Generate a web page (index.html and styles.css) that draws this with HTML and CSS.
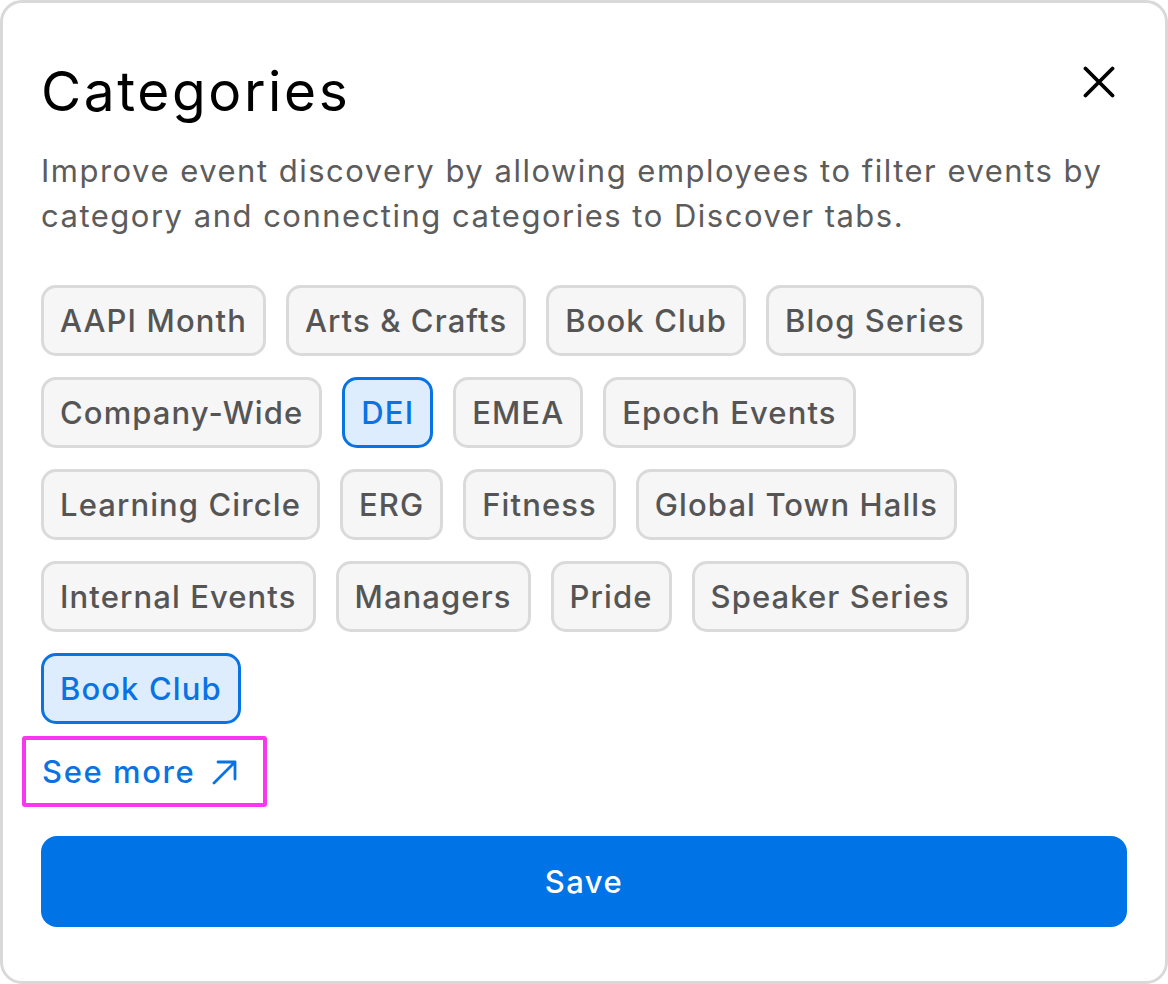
FILE: index.html
```html
<!DOCTYPE html>
<html lang="en">
<head>
<meta charset="utf-8">
<title>Categories</title>
<link rel="stylesheet" href="styles.css">
</head>
<body>
<div class="card">
  <div class="header">
    <h1 class="title">Categories</h1>
    <button class="close" aria-label="Close">
      <svg width="32" height="32" viewBox="0 0 32 32"><path d="M2.5 2.5 L29.5 29.5 M29.5 2.5 L2.5 29.5" stroke="#000" stroke-width="3.8" stroke-linecap="round" fill="none"/></svg>
    </button>
  </div>
  <p class="desc">Improve event discovery by allowing employees to filter events by category and connecting categories to Discover tabs.</p>
  <div class="chips">
    <div class="row">
      <span class="chip">AAPI Month</span>
      <span class="chip">Arts &amp; Crafts</span>
      <span class="chip">Book Club</span>
      <span class="chip">Blog Series</span>
    </div>
    <div class="row">
      <span class="chip">Company-Wide</span>
      <span class="chip selected">DEI</span>
      <span class="chip">EMEA</span>
      <span class="chip">Epoch Events</span>
    </div>
    <div class="row">
      <span class="chip">Learning Circle</span>
      <span class="chip">ERG</span>
      <span class="chip">Fitness</span>
      <span class="chip">Global Town Halls</span>
    </div>
    <div class="row">
      <span class="chip">Internal Events</span>
      <span class="chip">Managers</span>
      <span class="chip">Pride</span>
      <span class="chip">Speaker Series</span>
    </div>
    <div class="row">
      <span class="chip selected">Book Club</span>
    </div>
  </div>
  <a class="see-more" href="#">See more
    <svg width="26" height="26" viewBox="0 0 26 26"><path d="M2 24 L23 3 M6 3 H23 V20" stroke="#0a73e4" stroke-width="2.8" stroke-linecap="round" stroke-linejoin="round" fill="none"/></svg>
  </a>
  <button class="save">Save</button>
</div>
</body>
</html>
```
FILE: styles.css
```css
html, body {
  margin: 0;
  padding: 0;
  background: #ffffff;
}
body {
  font-family: "Inter", "Noto Sans", sans-serif;
}
.card {
  box-sizing: border-box;
  width: 1168px;
  height: 984px;
  border: 3px solid #d9d9d9;
  border-radius: 22px;
  padding: 55px 38px 0 38px;
  background: #fff;
}
.header {
  display: flex;
  justify-content: space-between;
  align-items: center;
}
.title {
  margin: 0;
  font-size: 55px;
  font-weight: 400;
  letter-spacing: 2.6px;
  line-height: 66px;
  color: #000;
}
.close {
  border: 0;
  background: none;
  padding: 0;
  margin: 0 12px 18px 0;
  width: 32px;
  height: 32px;
  display: flex;
}
.desc {
  margin: 24px 0 0 0;
  font-size: 31px;
  letter-spacing: 1.5px;
  line-height: 45px;
  color: #5c5c5c;
  width: 1086px;
}
.chips {
  margin-top: 47px;
  display: flex;
  flex-direction: column;
  gap: 21px;
}
.row {
  display: flex;
  gap: 20px;
}
.chip {
  box-sizing: border-box;
  height: 71px;
  display: flex;
  align-items: center;
  padding: 0 16px;
  border: 3px solid #dadada;
  border-radius: 15px;
  background: #f6f6f6;
  color: #555555;
  font-size: 31px;
  letter-spacing: 1.1px;
  font-weight: 500;
}
.chip.selected {
  border-color: #0a73e4;
  background: #deedfd;
  color: #0a73e4;
}
.see-more {
  margin: 12px 0 0 -19px;
  box-sizing: border-box;
  width: 245px;
  height: 71px;
  display: flex;
  align-items: center;
  gap: 17px;
  padding-left: 16px;
  border: 4px solid #fb36f0;
  border-radius: 3px;
  color: #0a73e4;
  font-size: 31px;
  letter-spacing: 1.6px;
  font-weight: 500;
  text-decoration: none;
}
.save {
  display: block;
  margin-top: 29px;
  width: 1086px;
  height: 91px;
  border: 0;
  border-radius: 16px;
  background: #0073e6;
  color: #fff;
  font-family: inherit;
  font-size: 31px;
  letter-spacing: 1.5px;
  font-weight: 500;
}
```
